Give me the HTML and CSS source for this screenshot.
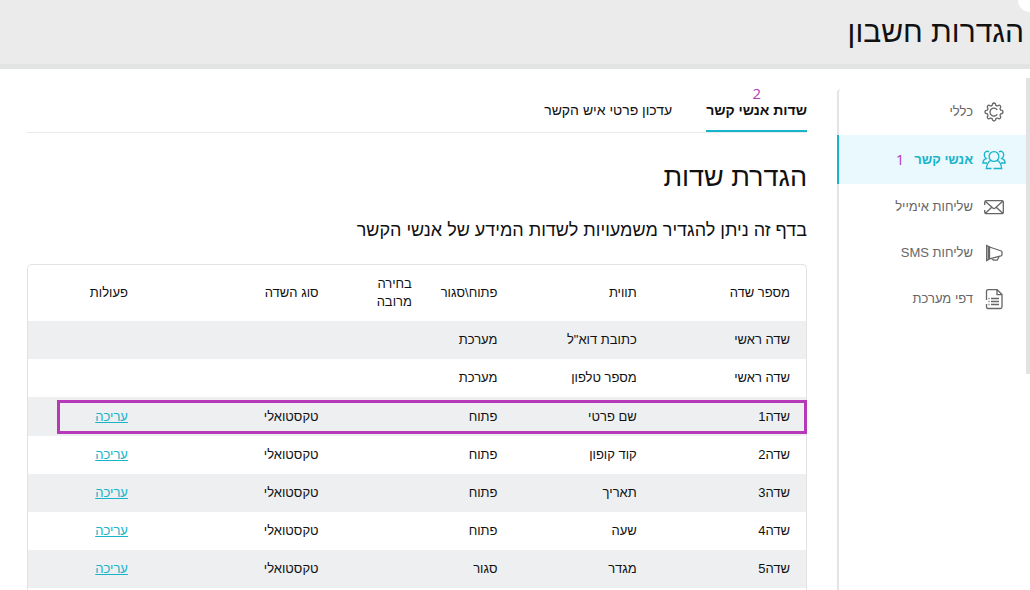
FILE: index.html
```html
<!DOCTYPE html>
<html lang="he" dir="rtl">
<head>
<meta charset="utf-8">
<title>הגדרות חשבון</title>
<link rel="stylesheet" href="styles.css">
</head>
<body>
<header class="header"><h1 class="header-title">הגדרות חשבון</h1></header>
<div class="page">
  <div class="rail"></div>
  <nav class="sidebar">
    <a class="nav-item" href="#">
      <svg class="icon" viewBox="0 0 24 24"><path d="M10.200 5.200 Q10.400 3 12 3 T13.800 5.200 Q14.500 6 15.700 5.900 Q17.200 4.600 18.300 5.700 T18.100 8.300 Q18 9.500 18.800 10.200 Q21 10.400 21 12 T18.800 13.800 Q18 14.500 18.100 15.700 Q19.400 17.200 18.300 18.300 T15.700 18.100 Q14.500 18 13.800 18.800 Q13.600 21 12 21 T10.200 18.800 Q9.500 18 8.300 18.100 Q6.800 19.400 5.700 18.300 T5.900 15.700 Q6 14.500 5.200 13.800 Q3 13.600 3 12 T5.200 10.200 Q6 9.500 5.900 8.300 Q4.600 6.800 5.700 5.700 T8.300 5.900 Q9.500 6 10.200 5.200Z"/><path d="M15.300 9.800a4 4 0 1 0 0 4.500"/></svg>
      <span>כללי</span>
    </a>
    <a class="nav-item active" href="#" aria-current="page">
      <svg class="icon" viewBox="0 0 24 24"><circle cx="12" cy="8.500" r="4.900"/><path d="M8.800 12.300C6.300 13.500 4.900 15.800 4.300 20.500H9.500M11.500 20.500H19.700C19.200 15.800 17.700 13.500 15.200 12.300M7 4C5 2.200 2 4 2.300 7C2.400 8.800 3.200 10 4.200 10.600C2 11.300.900 13 .900 15H5M17 4C19 2.200 22 4 21.700 7C21.600 8.800 20.800 10 19.800 10.600C22 11.300 23.100 13 23.100 15H19"/></svg>
      <span>אנשי קשר</span><span class="mark">1</span>
    </a>
    <a class="nav-item" href="#">
      <svg class="icon" viewBox="0 0 24 24"><path d="M2.700 10V7.500Q2.700 5.700 4.500 5.700H20Q21.300 5.700 21.300 7V17.500Q21.300 18.700 20 18.700H4.500Q2.700 18.700 2.700 17V15M3.500 6.500L10.800 13Q12 14 13.200 13L20.700 6.300M3.700 18L9.500 12.500M20.500 18L14.500 12.500"/></svg>
      <span>שליחות אימייל</span>
    </a>
    <a class="nav-item" href="#">
      <svg class="icon" viewBox="0 0 24 24"><path d="M4.700 4.500V19.500L7.500 17.800V6Z"/><path d="M7.500 6L19.300 10Q20 10.300 20 11V13.500Q20 14.500 19 14.800L7.500 17.800M10 17.500L11.500 19.200H15.200L17 16M6.300 6V18"/></svg>
      <span>שליחות SMS</span>
    </a>
    <a class="nav-item" href="#">
      <svg class="icon" viewBox="0 0 24 24"><path d="M4.500 13V4.500Q4.500 2.700 6 2.700H15.200L20 7.500V20Q20 21.500 18.500 21.500H6Q4.500 21.500 4.500 20V17M15 2.700V7.700H20M9 11.500H17M9 14.500H17M9 17.500H17M6.500 11.500H7.500M6.500 14.500H7.500M6.500 17.500H7.500"/></svg>
      <span>דפי מערכת</span>
    </a>
  </nav>
  <main class="main">
    <nav class="tabs">
      <a class="tab current" href="#">שדות אנשי קשר<span class="tab-mark">2</span></a>
      <a class="tab" href="#">עדכון פרטי איש הקשר</a>
    </nav>
    <h2 class="title">הגדרת שדות</h2>
    <p class="lead">בדף זה ניתן להגדיר משמעויות לשדות המידע של אנשי הקשר</p>
    <div class="card">
      <table class="fields">
        <colgroup><col class="c-num"><col class="c-label"><col class="c-open"><col class="c-multi"><col class="c-type"><col class="c-act"></colgroup>
        <thead><tr><th>מספר שדה</th><th>תווית</th><th>פתוח\סגור</th><th class="wrap">בחירה מרובה</th><th>סוג השדה</th><th>פעולות</th></tr></thead>
        <tbody>
          <tr><td>שדה ראשי</td><td>כתובת דוא"ל</td><td>מערכת</td><td></td><td></td><td></td></tr>
          <tr><td>שדה ראשי</td><td>מספר טלפון</td><td>מערכת</td><td></td><td></td><td></td></tr>
          <tr class="marked"><td>שדה1</td><td>שם פרטי</td><td>פתוח</td><td></td><td>טקסטואלי</td><td><a class="edit" href="#">עריכה</a></td></tr>
          <tr><td>שדה2</td><td>קוד קופון</td><td>פתוח</td><td></td><td>טקסטואלי</td><td><a class="edit" href="#">עריכה</a></td></tr>
          <tr><td>שדה3</td><td>תאריך</td><td>פתוח</td><td></td><td>טקסטואלי</td><td><a class="edit" href="#">עריכה</a></td></tr>
          <tr><td>שדה4</td><td>שעה</td><td>פתוח</td><td></td><td>טקסטואלי</td><td><a class="edit" href="#">עריכה</a></td></tr>
          <tr><td>שדה5</td><td>מגדר</td><td>סגור</td><td></td><td>טקסטואלי</td><td><a class="edit" href="#">עריכה</a></td></tr>
        </tbody>
      </table>
    </div>
  </main>
</div>
</body>
</html>
```
FILE: styles.css
```css
* { box-sizing: border-box; }
body {
  margin: 0;
  height: 100vh;
  overflow: hidden;
  display: flex;
  flex-direction: column;
  background: #fff;
  color: #111;
  font-family: "Liberation Sans", Arial, sans-serif;
  font-size: 13px;
  line-height: 18px;
}
a { color: inherit; text-decoration: none; }
.header {
  position: relative;
  overflow: hidden;
  flex: none;
  padding: 12px 6px;
  background: #ebebeb;
  border-bottom: 5px solid #e2e3e3;
}
.header::after {
  content: "";
  position: absolute;
  top: -12px;
  right: -12px;
  width: 24px;
  height: 24px;
  border-radius: 50%;
  background: #fff;
}
.header-title { margin: 0; font-size: 30px; line-height: 40px; font-weight: 400; }
.page { flex: 1; display: flex; min-height: 0; }
.rail { width: 4px; height: 296px; margin-top: 9px; background: #e2e2e2; }
.sidebar {
  flex: none;
  width: 189px;
  margin-top: 20px;
  border-left: 2px solid #e4e4e4;
  border-top-left-radius: 4px;
  color: #666;
}
.nav-item { display: flex; align-items: center; gap: 9px; height: 46px; padding-right: 20px; }
.nav-item.active {
  height: 49px;
  margin-left: -2px;
  background: #e9f9fd;
  border-left: 2px solid #18b4ca;
  color: #18b4ca;
  font-weight: 700;
}
.icon { width: 24px; height: 24px; fill: none; stroke: currentColor; stroke-width: 1.3; }
.mark, .tab-mark { color: #b63ab8; font-family: "Open Sans", sans-serif; font-size: 15px; line-height: 15px; font-weight: 400; }
.mark { margin-right: 1px; }
.main { flex: 1; display: flex; flex-direction: column; min-width: 0; padding: 20px 30px 0 27px; }
.tabs { display: flex; gap: 34px; border-bottom: 1px solid #eaeaea; }
.tab { position: relative; height: 43px; padding-top: 12px; font-size: 14px; }
.tab.current { margin-bottom: -1px; height: 43px; border-bottom: 2px solid #18b4ca; font-weight: 700; }
.tab-mark { position: absolute; top: -3px; left: 50%; margin-left: -4px; }
.title { margin: 24px 0 0; font-size: 27px; line-height: 40px; font-weight: 400; }
.lead { margin: 19px 0 20px; font-size: 18px; line-height: 28px; }
.card { flex: 1; min-height: 0; border: 1px solid #e2e2e2; border-bottom: 0; border-radius: 5px 5px 0 0; }
.fields { width: 100%; table-layout: fixed; border-collapse: collapse; }
.fields th, .fields td { padding: 0 16px 0 0; text-align: right; font-weight: 400; }
.fields th { height: 56px; white-space: nowrap; }
.fields .wrap { white-space: normal; padding-left: 30px; }
.fields td { height: 38px; }
.fields tbody tr:nth-child(odd) { background: #edeff1; }
.c-num { width: 19.7%; }
.c-label { width: 17.9%; }
.c-open { width: 11%; }
.c-multi { width: 12%; }
.c-type { width: 24.5%; }
.marked { position: relative; }
.marked td { height: 39px; }
.marked td:first-child::after {
  content: "";
  position: absolute;
  top: 3px;
  right: -1px;
  bottom: 2px;
  left: 29px;
  border: 3px solid #b63ab8;
}
.edit { color: #18b4ca; text-decoration: underline; }
```
